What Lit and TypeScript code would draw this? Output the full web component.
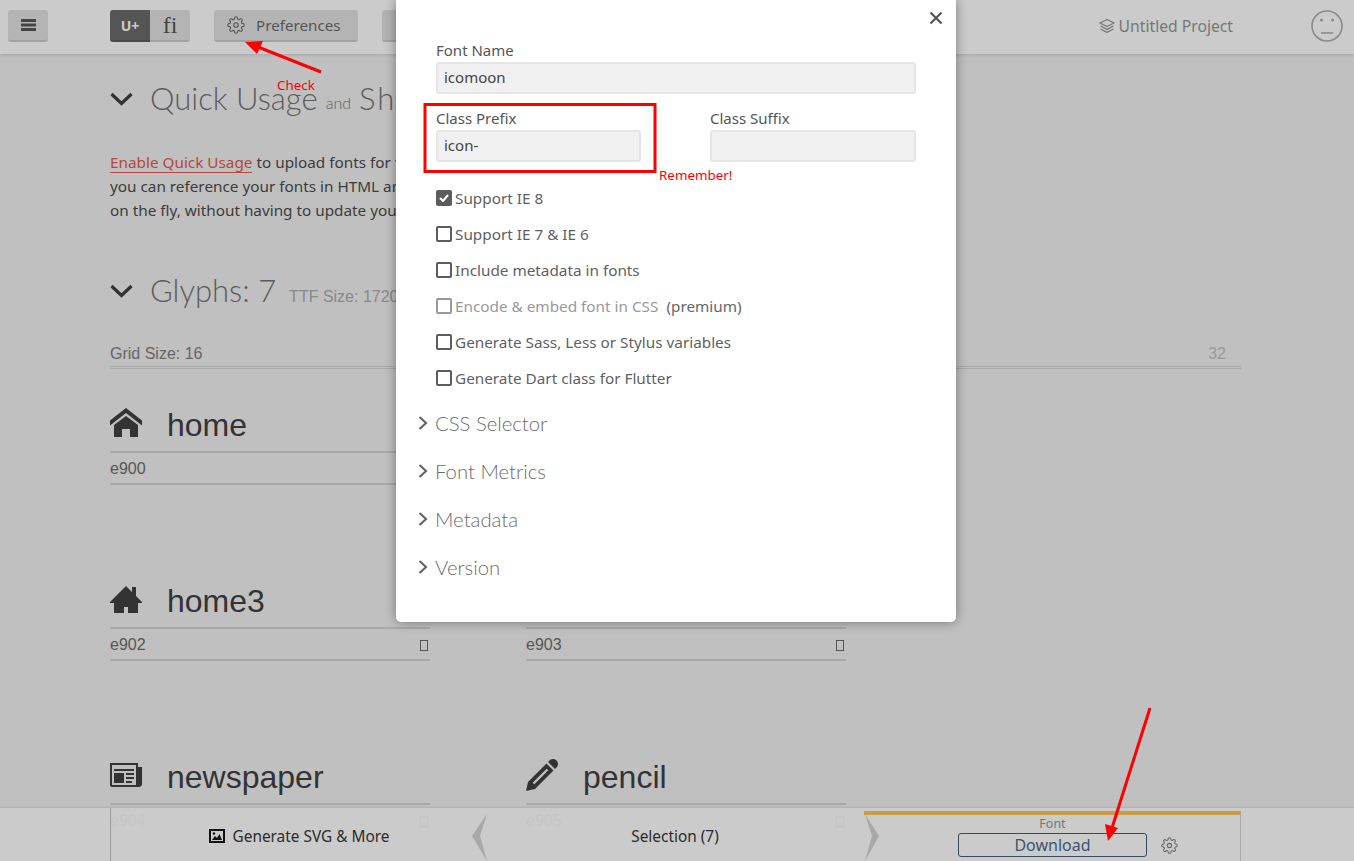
import { LitElement, html, css, svg } from "lit";
import { customElement } from "lit/decorators.js";

const GEAR =
  "M19.4 15a1.65 1.65 0 0 0 .33 1.82l.06.06a2 2 0 0 1 0 2.83 2 2 0 0 1-2.83 0l-.06-.06a1.65 1.65 0 0 0-1.82-.33 1.65 1.65 0 0 0-1 1.51V21a2 2 0 0 1-2 2 2 2 0 0 1-2-2v-.09A1.65 1.65 0 0 0 9 19.4a1.65 1.65 0 0 0-1.82.33l-.06.06a2 2 0 0 1-2.83 0 2 2 0 0 1 0-2.83l.06-.06a1.65 1.65 0 0 0 .33-1.82 1.65 1.65 0 0 0-1.51-1H3a2 2 0 0 1-2-2 2 2 0 0 1 2-2h.09A1.65 1.65 0 0 0 4.6 9a1.65 1.65 0 0 0-.33-1.82l-.06-.06a2 2 0 0 1 0-2.83 2 2 0 0 1 2.83 0l.06.06a1.65 1.65 0 0 0 1.82.33H9a1.65 1.65 0 0 0 1-1.51V3a2 2 0 0 1 2-2 2 2 0 0 1 2 2v.09a1.65 1.65 0 0 0 1 1.51 1.65 1.65 0 0 0 1.82-.33l.06-.06a2 2 0 0 1 2.83 0 2 2 0 0 1 0 2.83l-.06.06a1.65 1.65 0 0 0-.33 1.82V9a1.65 1.65 0 0 0 1.51 1H21a2 2 0 0 1 2 2 2 2 0 0 1-2 2h-.09a1.65 1.65 0 0 0-1.51 1z";

const HOME = "M32 18.451l-16-12.42-16 12.42v-5.064l16-12.42 16 12.42zM28 18v12h-8v-8h-8v8h-8v-12l12-9z";
const HOME3 = "M32 19l-6-6v-9h-4v5l-6-6-16 16v1h4v10h10v-6h4v6h10v-10h4z";
const NEWS =
  "M28 8v-4h-28v22c0 1.105 0.895 2 2 2h27c1.657 0 3-1.343 3-3v-17h-4zM26 26h-24v-20h24v20zM4 10h20v2h-20zM16 14h8v2h-8zM16 18h8v2h-8zM16 22h6v2h-6zM4 14h10v10h-10z";
const PENCIL =
  "M27 0c2.761 0 5 2.239 5 5 0 1.126-0.372 2.164-1 3l-2 2-7-7 2-2c0.836-0.628 1.874-1 3-1zM2 23l-2 9 9-2 18.5-18.5-7-7-18.5 18.5zM22.362 11.362l-14 14-1.724-1.724 14-14 1.724 1.724z";

const GLYPHS = [
  { name: "home", code: "e900", path: HOME },
  { name: "home2", code: "e901", path: HOME },
  { name: "home3", code: "e902", path: HOME3 },
  { name: "office", code: "e903", path: NEWS },
  { name: "newspaper", code: "e904", path: NEWS },
  { name: "pencil", code: "e905", path: PENCIL },
];

const OPTIONS = [
  { label: "Support IE 8", checked: true },
  { label: "Support IE 7 & IE 6" },
  { label: "Include metadata in fonts" },
  { label: "Encode & embed font in CSS", muted: true, note: "(premium)" },
  { label: "Generate Sass, Less or Stylus variables" },
  { label: "Generate Dart class for Flutter" },
];

const gear = (size: number) => html`<svg width=${size} height=${size} viewBox="0 0 24 24" fill="none" stroke="currentColor" stroke-width="1.5">
  <circle cx="12" cy="12" r="3"></circle>
  ${svg`<path d=${GEAR}></path>`}
</svg>`;

@customElement("app-root")
export class AppRoot extends LitElement {
  static styles = css`
    :host {
      display: block;
      position: relative;
      height: 861px;
      overflow: hidden;
      background: #c0c0c0;
      font-family: "Noto Sans", "Open Sans", sans-serif;
      color: #333;
    }
    .topbar {
      height: 54px;
      box-sizing: border-box;
      padding: 10px 11px 0 8px;
      display: flex;
      align-items: flex-start;
      background: #cbcbcb;
      box-shadow: 0 1px 3px rgba(0, 0, 0, 0.15);
    }
    .btn {
      height: 32px;
      box-sizing: border-box;
      display: flex;
      align-items: center;
      justify-content: center;
      background: #b4b4b4;
      border-bottom: 2px solid #a2a2a2;
      border-radius: 3px;
      color: #555;
    }
    .menu {
      width: 40px;
      margin-right: 62px;
    }
    .seg {
      display: flex;
      margin-right: 24px;
    }
    .seg .btn {
      width: 40px;
    }
    .seg .on {
      background: #555;
      border-bottom-color: #4a4a4a;
      border-radius: 3px 0 0 3px;
      color: #ccc;
      font-weight: 700;
      font-size: 14px;
    }
    .seg .off {
      border-radius: 0 3px 3px 0;
      font-family: "Liberation Serif", serif;
      font-size: 24px;
      color: #444;
    }
    .prefs {
      width: 144px;
      justify-content: flex-start;
      padding-left: 13px;
      gap: 11px;
      font-size: 15.2px;
      margin-right: 24px;
    }
    .next {
      width: 60px;
    }
    .project {
      margin-left: auto;
      height: 32px;
      display: flex;
      align-items: center;
      gap: 4px;
      font-size: 15.7px;
      color: #777;
      margin-right: 110px;
    }
    .face {
      position: absolute;
      top: 10px;
      right: 11px;
    }
    main {
      width: 1131px;
      margin-left: 110px;
    }
    .heading {
      display: flex;
      align-items: center;
      height: 40px;
      font-family: Lato, sans-serif;
      font-weight: 300;
      color: #5c5c5c;
      font-size: 31px;
      white-space: nowrap;
    }
    .heading svg {
      margin-right: 17px;
    }
    .heading .title {
      padding-bottom: 2px;
    }
    .heading .wide {
      letter-spacing: 2px;
    }
    .heading small {
      font-size: 16px;
      margin: 6px 8px 0;
    }
    .heading .meta {
      font-family: "Liberation Sans", sans-serif;
      font-weight: 400;
      font-size: 16px;
      color: #888;
      margin: 11px 0 0 13px;
    }
    .first {
      margin-top: 25px;
    }
    .intro {
      margin: 31px 0 49px;
      width: 760px;
      font-size: 15.3px;
      line-height: 24px;
      color: #3c3c3c;
    }
    .intro a {
      color: #b5473c;
      border-bottom: 1px solid #b5473c;
    }
    .sizes {
      margin-top: 29px;
      display: flex;
      justify-content: space-between;
      padding: 0 15px 4px 0;
      height: 22px;
      line-height: 28px;
      font-family: "Liberation Sans", sans-serif;
      font-size: 16px;
      color: #666;
      border-bottom: 3px double #a8a8a8;
    }
    .sizes span:last-child {
      color: #999;
    }
    .grid {
      margin-top: 29px;
      display: grid;
      grid-template-columns: 320px 320px;
      column-gap: 96px;
      grid-auto-rows: 176px;
      font-family: "Liberation Sans", sans-serif;
    }
    .glyph-head {
      height: 55px;
      box-sizing: border-box;
      padding-top: 2px;
      display: flex;
      align-items: center;
      gap: 25px;
      font-size: 32px;
      color: #333;
      border-bottom: 2px solid #aaa;
    }
    .glyph-head svg {
      fill: #333;
      margin-bottom: 6px;
    }
    .glyph-code {
      height: 32px;
      box-sizing: border-box;
      padding-top: 2px;
      display: flex;
      align-items: center;
      justify-content: space-between;
      font-size: 16px;
      color: #555;
      border-bottom: 2px solid #aaa;
    }
    .tofu {
      width: 6px;
      height: 9px;
      margin-right: 2px;
      border: 1px solid #555;
    }
    .footer {
      position: absolute;
      left: 0;
      right: 0;
      bottom: 0;
      height: 53px;
      padding-left: 110px;
      box-sizing: border-box;
      display: flex;
      background: rgba(203, 203, 203, 0.95);
      box-shadow: 0 -1px 2px rgba(0, 0, 0, 0.1);
      font-size: 15.4px;
      color: #2c2c2c;
    }
    .foot-a {
      width: 362px;
      box-sizing: border-box;
      padding: 3px 0 0 15px;
      display: flex;
      align-items: center;
      justify-content: center;
      gap: 8px;
      border-left: 1px solid #999;
    }
    .foot-b {
      width: 392px;
      box-sizing: border-box;
      padding: 3px 0 0 14px;
      display: flex;
      align-items: center;
      justify-content: center;
    }
    .foot-c {
      width: 377px;
      box-sizing: border-box;
      margin-top: 3px;
      border-top: 4px solid #cf9a42;
      border-right: 1px solid #a8a8a8;
      display: grid;
      grid-template-columns: 94px 189px auto;
      grid-template-rows: 18px 24px;
      align-items: center;
    }
    .foot-c .label {
      grid-column: 2;
      text-align: center;
      font-size: 12.5px;
      color: #777;
      line-height: 16px;
    }
    .download {
      grid-column: 2;
      grid-row: 2;
      height: 24px;
      box-sizing: border-box;
      display: flex;
      align-items: center;
      justify-content: center;
      border: 1px solid #34495e;
      border-radius: 3px;
      font-size: 16px;
      color: #3d5470;
    }
    .foot-gear {
      grid-column: 3;
      grid-row: 2;
      display: flex;
      margin-left: 14px;
      color: #666;
    }
    .chevron {
      position: absolute;
      top: 6px;
    }
    .modal {
      position: absolute;
      left: 396px;
      top: 0;
      width: 560px;
      height: 622px;
      box-sizing: border-box;
      padding: 40px 40px 0;
      background: #fff;
      border-radius: 0 0 5px 5px;
      box-shadow: 0 0 12px rgba(0, 0, 0, 0.4);
      font-size: 15px;
      color: #555;
    }
    .close {
      position: absolute;
      top: 11px;
      right: 13px;
      display: flex;
      color: #555;
    }
    .field label {
      display: block;
      height: 22px;
      line-height: 21px;
    }
    .input {
      height: 32px;
      box-sizing: border-box;
      padding: 0 0 2px 6px;
      display: flex;
      align-items: center;
      background: #f0f0f0;
      border: 2px solid #e5e5e5;
      border-radius: 3px;
      color: #444;
    }
    .pair {
      margin-top: 14px;
      display: grid;
      grid-template-columns: 205px 206px;
      column-gap: 69px;
    }
    .options {
      margin-top: 18px;
      display: flex;
      flex-direction: column;
      font-size: 15.3px;
      color: #5f5f5f;
    }
    .option {
      height: 36px;
      display: flex;
      align-items: center;
      gap: 3px;
    }
    .box {
      width: 16px;
      height: 16px;
      box-sizing: border-box;
      display: flex;
      align-items: center;
      justify-content: center;
      border: 2px solid #5c5c5c;
      border-radius: 2px;
    }
    .box.checked {
      background: #5c5c5c;
    }
    .option.muted {
      color: #999;
    }
    .option.muted .box {
      border-color: #999;
    }
    .option em {
      font-style: normal;
      color: #666;
      margin-left: 5px;
    }
    .accordion {
      margin: 3px 0 0 -18px;
    }
    .acc-row {
      height: 48px;
      display: flex;
      align-items: center;
      gap: 7px;
      font-family: Lato, sans-serif;
      font-weight: 300;
      font-size: 20.3px;
      color: #6c6c6c;
    }
    .marks {
      position: absolute;
      left: 0;
      top: 0;
      pointer-events: none;
    }
    .note {
      position: absolute;
      font-size: 13.4px;
      color: #f00;
      line-height: 16px;
    }
    .check {
      left: 277px;
      top: 77px;
    }
    .remember {
      left: 659px;
      top: 167px;
    }
  `;

  private glyph(g: { name: string; code: string; path: string }) {
    return html`<div>
      <div class="glyph-head">
        <svg width="32" height="32" viewBox="0 0 32 32"><path d=${g.path}></path></svg>
        <span>${g.name}</span>
      </div>
      <div class="glyph-code"><span>${g.code}</span><span class="tofu"></span></div>
    </div>`;
  }

  private chevronDown() {
    return html`<svg width="23" height="14" viewBox="0 0 23 14" fill="none" stroke="#333" stroke-width="3.2"><path d="M1.5 2l10 9.5 10-9.5"></path></svg>`;
  }

  render() {
    return html`
      <header class="topbar">
        <div class="btn menu">
          <svg width="15" height="12" viewBox="0 0 15 12" fill="#444"><path d="M0 0h15v3H0zM0 4.5h15v3H0zM0 9h15v3H0z"></path></svg>
        </div>
        <div class="seg">
          <div class="btn on">U+</div>
          <div class="btn off">fi</div>
        </div>
        <div class="btn prefs">${gear(18)}<span>Preferences</span></div>
        <div class="btn next"></div>
        <div class="project">
          <svg width="16" height="16" viewBox="0 0 16 16" fill="none" stroke="#777" stroke-width="1.3" stroke-linejoin="round"><path d="M8 1.5l7 3.5-7 3.5L1 5zM1.5 8L8 11.3 14.5 8M1.5 11L8 14.3 14.5 11"></path></svg>
          <span>Untitled Project</span>
        </div>
        <svg class="face" width="32" height="32" viewBox="0 0 32 32" fill="none" stroke="#8a8a8a" stroke-width="1.6">
          <circle cx="16" cy="16" r="15"></circle>
          <circle cx="10.5" cy="10" r="1.5" fill="#8a8a8a" stroke="none"></circle>
          <circle cx="21.5" cy="10" r="1.5" fill="#8a8a8a" stroke="none"></circle>
          <path d="M10 23h12"></path>
        </svg>
      </header>

      <main>
        <div class="heading first">${this.chevronDown()}<span class="title">Quick Usage</span><small>and</small><span class="title wide">Sh</span></div>
        <p class="intro">
          <a>Enable Quick Usage</a> to upload fonts for free. Once enabled,<br />
          you can reference your fonts in HTML and CSS right away<br />
          on the fly, without having to update your project.
        </p>
        <div class="heading">${this.chevronDown()}<span class="title">Glyphs: 7</span><span class="meta">TTF Size: 1720 bytes</span></div>
        <div class="sizes"><span>Grid Size: 16</span><span>32</span></div>
        <div class="grid">${GLYPHS.map((g) => this.glyph(g))}</div>
      </main>

      <footer class="footer">
        <div class="foot-a">
          <svg width="16" height="14" viewBox="0 0 16 14"><path fill="#111" fill-rule="evenodd" d="M0 0h16v14H0zM2 2v10h12V2z"></path><path fill="#111" d="M3 11l3-4 2 2 2.5-4L13 11z"></path><circle cx="5" cy="4.5" r="1.2" fill="#111"></circle></svg>
          <span>Generate SVG &amp; More</span>
        </div>
        <div class="foot-b">Selection (7)</div>
        <div class="foot-c">
          <div class="label">Font</div>
          <div class="download">Download</div>
          <div class="foot-gear">${gear(17)}</div>
        </div>
        <svg class="chevron" style="left:472px" width="15" height="47" viewBox="0 0 15 47"><path fill="#a8a8a8" d="M15 0L0 22l15 25-7-25z"></path></svg>
        <svg class="chevron" style="left:865px" width="15" height="47" viewBox="0 0 15 47"><path fill="#a8a8a8" d="M0 0l14 22L0 47l7-25z"></path></svg>
      </footer>

      <section class="modal">
        <div class="close">
          <svg width="14" height="14" viewBox="0 0 14 14" stroke="#555" stroke-width="2.2"><path d="M1.5 1.5l11 11M12.5 1.5l-11 11"></path></svg>
        </div>
        <div class="field"><label>Font Name</label><div class="input">icomoon</div></div>
        <div class="pair">
          <div class="field"><label>Class Prefix</label><div class="input">icon-</div></div>
          <div class="field"><label>Class Suffix</label><div class="input"></div></div>
        </div>
        <div class="options">
          ${OPTIONS.map(
            (o) => html`<div class="option ${o.muted ? "muted" : ""}">
              <span class="box ${o.checked ? "checked" : ""}">
                ${o.checked
                  ? html`<svg width="10" height="8" viewBox="0 0 10 8" fill="none" stroke="#fff" stroke-width="2"><path d="M1 4l3 3 5-6"></path></svg>`
                  : ""}
              </span>
              <span>${o.label}</span>
              ${o.note ? html`<em>${o.note}</em>` : ""}
            </div>`
          )}
        </div>
        <div class="accordion">
          ${["CSS Selector", "Font Metrics", "Metadata", "Version"].map(
            (t) => html`<div class="acc-row">
              <svg width="10" height="14" viewBox="0 0 10 14" fill="none" stroke="#666" stroke-width="2.2"><path d="M1.5 1l6.5 6-6.5 6"></path></svg>
              <span>${t}</span>
            </div>`
          )}
        </div>
      </section>

      <svg class="marks" width="1354" height="861" viewBox="0 0 1354 861">
        <rect x="425" y="104.5" width="230" height="67" fill="none" stroke="#f00" stroke-width="3"></rect>
        <path d="M321 72L258 47" stroke="#f00" stroke-width="3" fill="none"></path>
        <path d="M245 42l18-1-6 13z" fill="#f00"></path>
        <path d="M1150 708l-38 120" stroke="#f00" stroke-width="3" fill="none"></path>
        <path d="M1108 841l-3-17 13 4z" fill="#f00"></path>
      </svg>
      <span class="note check">Check</span>
      <span class="note remember">Remember!</span>
    `;
  }
}
